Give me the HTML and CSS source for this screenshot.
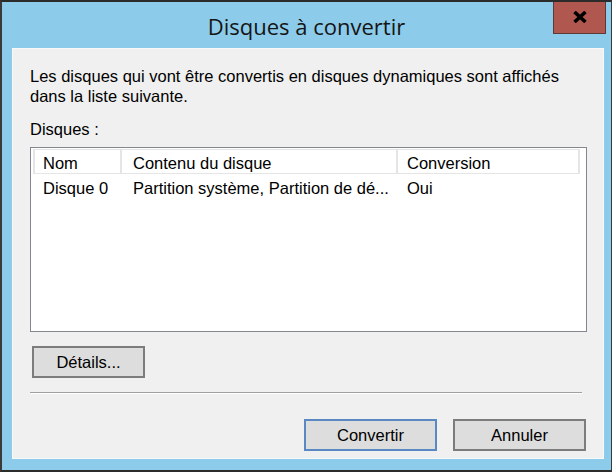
FILE: index.html
```html
<!DOCTYPE html>
<html lang="fr">
<head>
  <meta charset="UTF-8" />
  <meta name="viewport" content="width=device-width, initial-scale=1.0" />
  <title>Disques à convertir</title>
  <link rel="stylesheet" href="styles.css">
</head>
<body>

<div class="window">

  <div class="titlebar">
    <span></span>
    <h1 class="title">Disques à convertir</h1>
    <div class="controls">
      <button type="button" class="close" aria-label="Fermer">
        <svg width="14" height="12" viewBox="0 0 14 12">
          <path d="M1.5 1 L12.5 11 M12.5 1 L1.5 11" stroke="#000" stroke-width="3.6" fill="none" />
        </svg>
      </button>
    </div>
  </div>

  <div class="client">
    <p class="intro">Les disques qui vont être convertis en disques dynamiques sont affichés<br>dans la liste suivante.</p>

    <div class="label">Disques :</div>

    <div class="listview">
      <div class="lv-header">
        <div class="col col-name">Nom</div>
        <div class="col col-content">Contenu du disque</div>
        <div class="col col-conv">Conversion</div>
      </div>
      <div class="lv-row">
        <div class="col col-name">Disque 0</div>
        <div class="col col-content">Partition système, Partition de dé...</div>
        <div class="col col-conv">Oui</div>
      </div>
    </div>

    <button type="button" class="btn btn-details">Détails...</button>

    <div class="separator"></div>

    <div class="actions">
      <button type="button" class="btn btn-default">Convertir</button>
      <button type="button" class="btn">Annuler</button>
    </div>
  </div>

</div>

</body>
</html>
```

FILE: styles.css
```css
*,
*::before,
*::after {
  box-sizing: border-box;
  margin: 0;
  padding: 0;
}

body {
  font-family: "Liberation Sans", Arial, sans-serif;
  font-size: 16.5px;
  color: #000;
  background: #2b2b2b;
}

.window {
  width: 612px;
  height: 472px;
  background-color: #8ccbea;
  border-top: 2px solid #2b2b2b;
  border-left: 2px solid #3a3a3a;
  border-right: 1px solid #3a3a3a;
  border-bottom: 2px solid #2b2b2b;
}

/* barre de titre */
.titlebar {
  height: 46px;
  display: grid;
  grid-template-columns: 1fr auto 1fr;
}

.title {
  font-family: "Open Sans", "Noto Sans", sans-serif;
  font-weight: normal;
  font-size: 22px;
  color: #151515;
  line-height: 26px;
  padding-top: 11px;
}

.controls {
  display: flex;
  justify-content: flex-end;
  align-items: flex-start;
}

.close {
  width: 53px;
  height: 32px;
  margin-right: 5px;
  background-color: #b0584f;
  border: 1px solid #5e3935;
  border-top: none;
  display: flex;
  align-items: center;
  justify-content: center;
  padding-bottom: 2px;
}

/* zone cliente */
.client {
  margin: 0 7px 0 10px;
  height: 411px;
  background-color: #f0f0f0;
  border: 1px solid #f9f9f9;
  padding: 17px 16px 7px 17px;
  display: flex;
  flex-direction: column;
}

.intro {
  line-height: 20px;
}

.label {
  line-height: 20px;
  margin-top: 13px;
  margin-bottom: 8px;
}

.listview {
  height: 185px;
  background: #fff;
  border: 1px solid #828790;
  padding: 1px 6px 0 2px;
}

.lv-header,
.lv-row {
  display: flex;
  line-height: 20px;
}

.lv-header .col {
  height: 25px;
  padding-top: 3px;
  border-top: 1px solid #e5e5e5;
  border-bottom: 1px solid #e5e5e5;
  border-right: 2px solid #e5e5e5;
}

.lv-header .col-name {
  border-left: 2px solid #e5e5e5;
}

.lv-row {
  padding-top: 4px;
}

.col {
  white-space: nowrap;
  overflow: hidden;
}

.col-name { width: 89px; padding-left: 8px; }
.col-content { width: 276px; padding-left: 11px; }
.col-conv { width: 182px; padding-left: 9px; }

.lv-row .col-name { padding-left: 10px; }

/* boutons */
.btn {
  font-family: "Liberation Sans", Arial, sans-serif;
  font-size: 16.5px;
  color: #000;
  height: 32px;
  background-color: #dddddd;
  border: 2px solid #7c7c7c;
  cursor: pointer;
}

.btn-details {
  width: 113px;
  margin: 14px 0 0 2px;
  align-self: flex-start;
}

.btn-default {
  border-color: #5a88c2;
}

.separator {
  margin: 14px 5px 0 0;
  border-top: 1px solid #a0a0a0;
  border-bottom: 1px solid #fff;
}

.actions {
  margin-top: 25px;
  display: flex;
  justify-content: flex-end;
  gap: 16px;
  padding-right: 1px;
}

.actions .btn {
  width: 133px;
}
```
